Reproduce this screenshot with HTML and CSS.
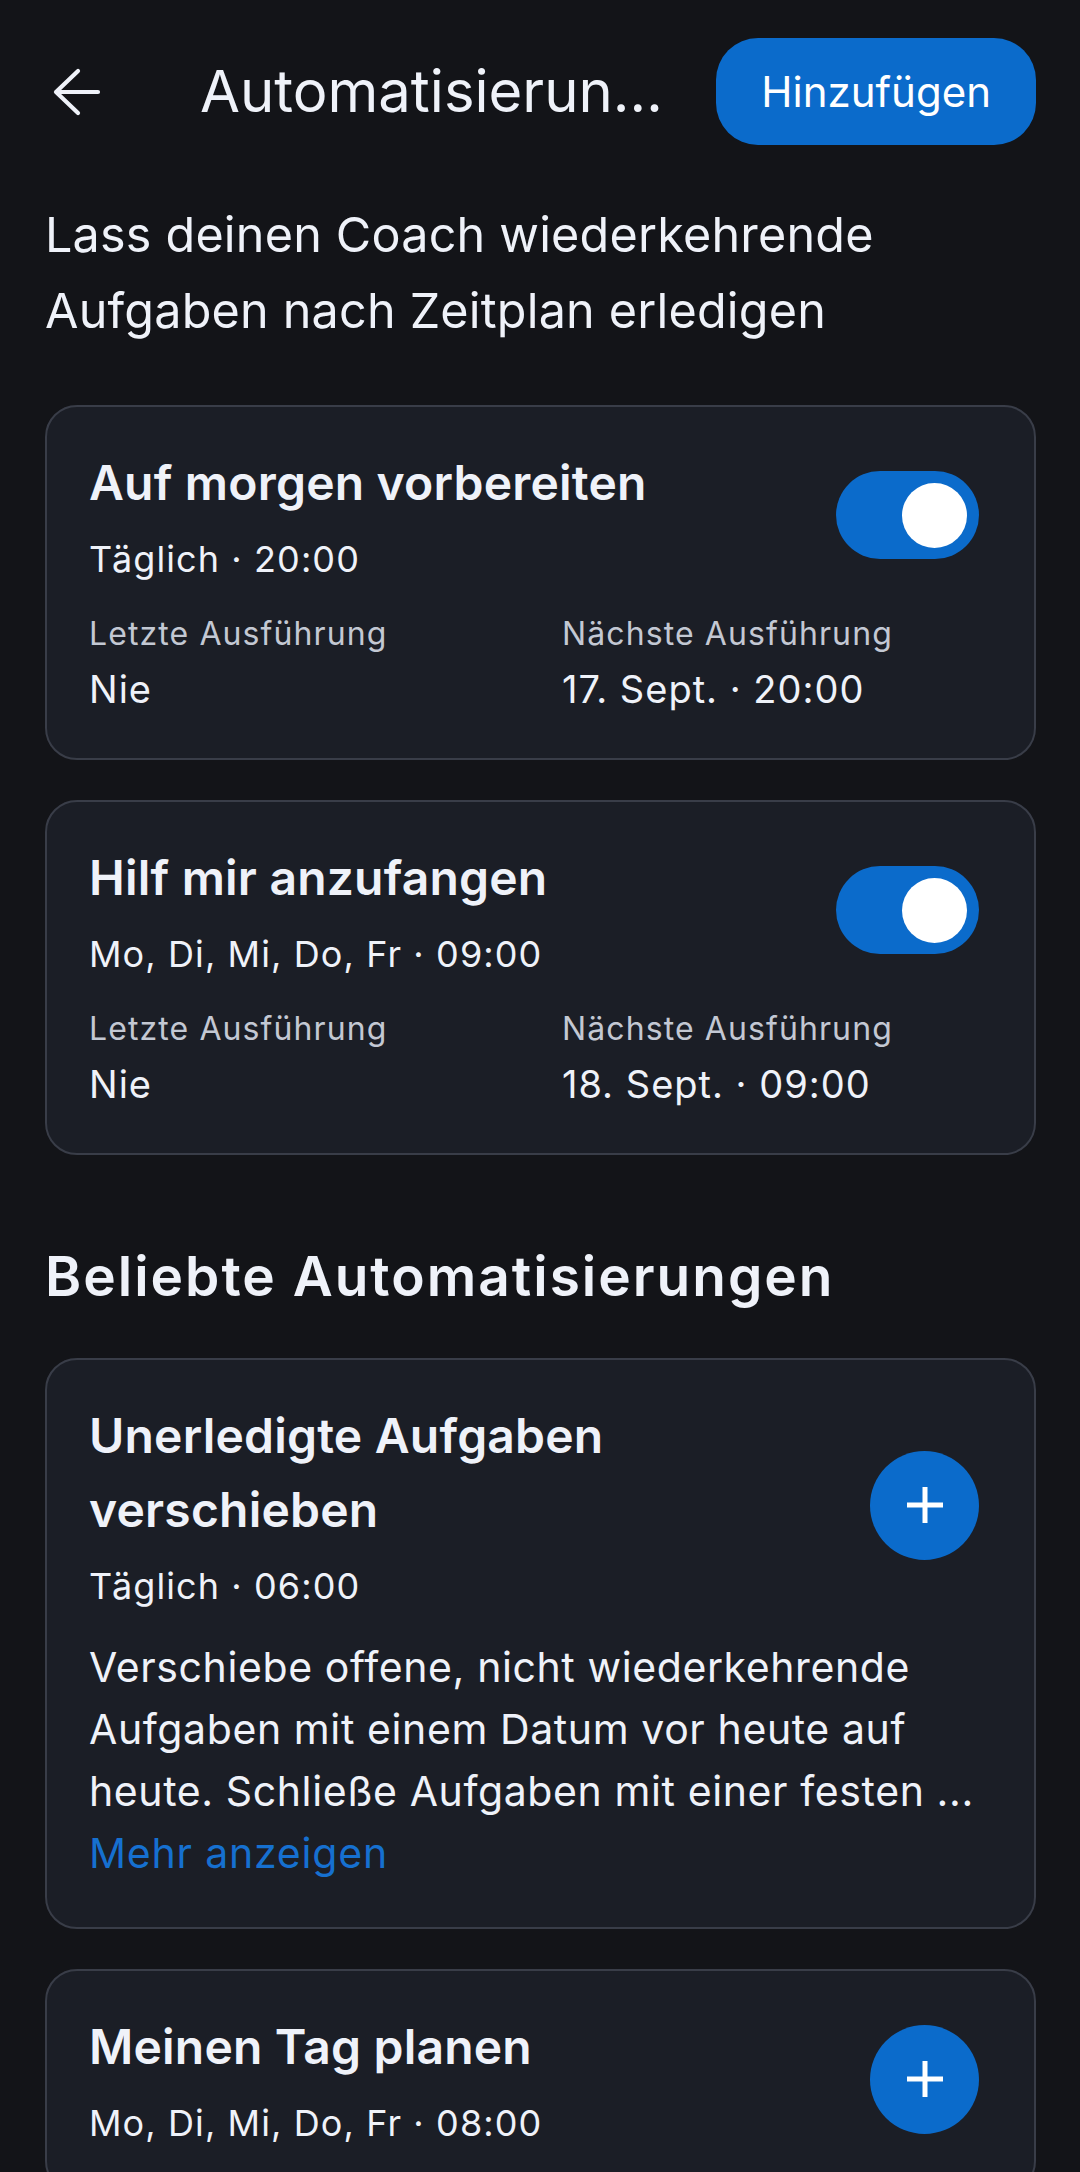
FILE: index.html
```html
<!DOCTYPE html>
<html lang="de">
<head>
<meta charset="utf-8">
<title>Automatisierungen</title>
<link rel="stylesheet" href="styles.css">
</head>
<body>
<div class="screen">
  <header class="topbar">
    <button class="back" aria-label="Zurück">
      <svg width="48" height="48" viewBox="0 0 48 48" fill="none" stroke="currentColor" stroke-width="4.2" stroke-linecap="round" stroke-linejoin="round">
        <path d="M45 24 H3 M25 3 L3 24 L25 45"/>
      </svg>
    </button>
    <h1 class="title">Automatisierungen</h1>
    <button class="add-btn">Hinzufügen</button>
  </header>

  <p class="intro">Lass deinen Coach wiederkehrende Aufgaben nach Zeitplan erledigen</p>

  <section class="list">
    <article class="card">
      <div class="card-head">
        <div class="card-text">
          <h2 class="card-title">Auf morgen vorbereiten</h2>
          <div class="schedule">Täglich · 20:00</div>
        </div>
        <div class="toggle on"><span class="knob"></span></div>
      </div>
      <div class="runs">
        <div class="run">
          <div class="run-label">Letzte Ausführung</div>
          <div class="run-value">Nie</div>
        </div>
        <div class="run">
          <div class="run-label">Nächste Ausführung</div>
          <div class="run-value">17. Sept. · 20:00</div>
        </div>
      </div>
    </article>

    <article class="card">
      <div class="card-head">
        <div class="card-text">
          <h2 class="card-title">Hilf mir anzufangen</h2>
          <div class="schedule">Mo, Di, Mi, Do, Fr · 09:00</div>
        </div>
        <div class="toggle on"><span class="knob"></span></div>
      </div>
      <div class="runs">
        <div class="run">
          <div class="run-label">Letzte Ausführung</div>
          <div class="run-value">Nie</div>
        </div>
        <div class="run">
          <div class="run-label">Nächste Ausführung</div>
          <div class="run-value">18. Sept. · 09:00</div>
        </div>
      </div>
    </article>
  </section>

  <h2 class="section-title">Beliebte Automatisierungen</h2>

  <section class="list">
    <article class="card">
      <div class="card-head">
        <div class="card-text">
          <h2 class="card-title">Unerledigte Aufgaben<br>verschieben</h2>
          <div class="schedule">Täglich · 06:00</div>
        </div>
        <button class="plus" aria-label="Hinzufügen">
          <svg width="40" height="40" viewBox="0 0 40 40" fill="none" stroke="#fff" stroke-width="5">
            <path d="M20 2 V38 M2 20 H38"/>
          </svg>
        </button>
      </div>
      <p class="desc">Verschiebe offene, nicht wiederkehrende Aufgaben mit einem Datum vor heute auf heute. Schließe Aufgaben mit einer festen ...</p>
      <a class="more" href="#">Mehr anzeigen</a>
    </article>

    <article class="card">
      <div class="card-head">
        <div class="card-text">
          <h2 class="card-title">Meinen Tag planen</h2>
          <div class="schedule">Mo, Di, Mi, Do, Fr · 08:00</div>
        </div>
        <button class="plus" aria-label="Hinzufügen">
          <svg width="40" height="40" viewBox="0 0 40 40" fill="none" stroke="#fff" stroke-width="5">
            <path d="M20 2 V38 M2 20 H38"/>
          </svg>
        </button>
      </div>
    </article>
  </section>
</div>
</body>
</html>
```

FILE: styles.css
```css
* { box-sizing: border-box; }

html, body {
  margin: 0;
  padding: 0;
  background: #131418;
}

body {
  font-family: Inter, Lato, "Noto Sans", sans-serif;
  color: #eff2f9;
}

.screen {
  width: 1080px;
  height: 2172px;
  overflow: hidden;
  padding: 0 44px 0 45px;
}

.topbar {
  display: flex;
  align-items: center;
  padding-top: 38px;
  height: 145px;
}

.back {
  background: none;
  border: 0;
  padding: 0;
  margin-left: 8px;
  width: 48px;
  height: 48px;
  color: #eff2f9;
  display: flex;
}

.title {
  flex: 1;
  min-width: 0;
  margin: 0 24px 0 99px;
  font-size: 58px;
  font-weight: 400;
  white-space: nowrap;
  overflow: hidden;
  text-overflow: ellipsis;
  line-height: 1.2;
}

.add-btn {
  flex: none;
  height: 107px;
  padding: 0 45px;
  border: 0;
  border-radius: 42px;
  background: #0b6bcb;
  color: #fff;
  font-family: inherit;
  font-size: 42px;
  font-weight: 400;
}

.intro {
  margin: 52px 0 56px;
  font-size: 48.5px;
  line-height: 76px;
  font-weight: 400;
  letter-spacing: 0.2px;
}

.list {
  display: flex;
  flex-direction: column;
  gap: 40px;
}

.card {
  background: #1b1e26;
  border: 2px solid #393d48;
  border-radius: 32px;
  padding: 39px 43px 43px 42px;
}

.card-head {
  display: flex;
  align-items: center;
  gap: 24px;
}

.card-text {
  flex: 1;
  min-width: 0;
}

.card-title {
  margin: 0;
  font-size: 48px;
  line-height: 74px;
  font-weight: 600;
  letter-spacing: 0.2px;
}

.schedule {
  margin-top: 14px;
  font-size: 36px;
  line-height: 50px;
  letter-spacing: 1.1px;
}

.toggle {
  flex: none;
  width: 143px;
  height: 88px;
  border-radius: 44px;
  background: #0b6bcb;
  margin-right: 12px;
  display: flex;
  align-items: center;
  justify-content: flex-end;
  padding: 0 12px;
}

.knob {
  width: 65px;
  height: 65px;
  border-radius: 50%;
  background: #fff;
}

.plus {
  flex: none;
  width: 109px;
  height: 109px;
  border-radius: 50%;
  border: 0;
  padding: 0;
  background: #0b6bcb;
  margin-right: 12px;
  display: flex;
  align-items: center;
  justify-content: center;
}

.runs {
  display: grid;
  grid-template-columns: 1fr 1fr;
  column-gap: 44px;
  margin-top: 28px;
}

.run-label {
  font-size: 32px;
  line-height: 44px;
  color: #c3c8d3;
  letter-spacing: 1.1px;
}

.run-value {
  margin-top: 7px;
  font-size: 38px;
  line-height: 52px;
  letter-spacing: 1px;
}

.section-title {
  margin: 85px 0 46px;
  font-size: 55px;
  line-height: 72px;
  font-weight: 600;
  letter-spacing: 2px;
}

.desc {
  margin: 25px 0 0;
  font-size: 41px;
  line-height: 62px;
  letter-spacing: 0.6px;
}

.more {
  display: block;
  font-size: 41px;
  line-height: 62px;
  letter-spacing: 0.8px;
  color: #1670d0;
  text-decoration: none;
}
```
